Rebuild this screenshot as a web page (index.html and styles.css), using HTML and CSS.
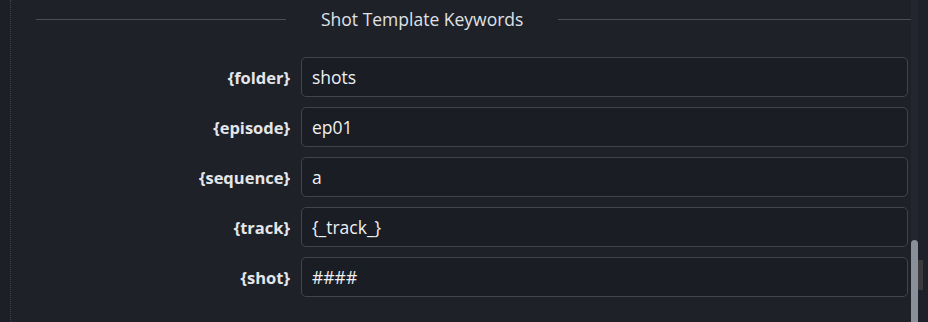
FILE: index.html
```html
<!DOCTYPE html>
<html lang="en">
<head>
    <meta charset="UTF-8">
    <meta name="viewport" content="width=device-width, initial-scale=1.0">
    <title>Shot Template Keywords</title>
    <link rel="stylesheet" href="styles.css">
</head>
<body>

    <div class="gutter"></div>

    <div class="panel">
        <div class="section-title">
            <span class="rule rule-left"></span>
            <h2>Shot Template Keywords</h2>
            <span class="rule"></span>
        </div>

        <div class="fields">
            <label for="kwFolder">{folder}</label>
            <input type="text" id="kwFolder" value="shots">

            <label for="kwEpisode">{episode}</label>
            <input type="text" id="kwEpisode" value="ep01">

            <label for="kwSequence">{sequence}</label>
            <input type="text" id="kwSequence" value="a">

            <label for="kwTrack">{track}</label>
            <input type="text" id="kwTrack" value="{_track_}">

            <label for="kwShot">{shot}</label>
            <input type="text" id="kwShot" value="####">
        </div>
    </div>

    <div class="scroll-track">
        <div class="scroll-thumb"></div>
    </div>

    <div class="side">
        <div class="side-mark"></div>
    </div>

</body>
</html>
```

FILE: styles.css
```css
html, body {
    height: 100%;
}
body {
    margin: 0;
    display: flex;
    overflow: hidden;
    background-color: #1f2128;
    color: #e6e9ee;
    font-family: "Open Sans", "Noto Sans", sans-serif;
}
.gutter {
    width: 10px;
    flex-shrink: 0;
    background-color: #1c1f27;
    border-right: 1px dotted #3d414a;
}
.panel {
    flex: 1;
    padding: 0 0 0 25px;
}
.section-title {
    display: flex;
    align-items: center;
    gap: 35px;
    height: 38px;
}
.section-title h2 {
    margin: 0;
    font-size: 17.5px;
    font-weight: 500;
    color: #dfe2e7;
    white-space: nowrap;
}
.rule {
    flex: 1;
    height: 1px;
    background-color: #4a4d55;
}
.rule-left {
    flex: 0 0 250px;
}
.fields {
    display: grid;
    grid-template-columns: 254px 1fr;
    column-gap: 11px;
    row-gap: 10px;
    margin: 19px 3px 0 0;
}
.fields label {
    text-align: right;
    align-self: center;
    font-weight: 700;
    font-size: 16.5px;
    color: #e3e6eb;
}
.fields input[type="text"] {
    height: 40px;
    box-sizing: border-box;
    padding: 0 10px;
    background-color: #1b1d24;
    border: 1px solid #41444c;
    border-radius: 5px;
    color: #eef0f3;
    font-family: inherit;
    font-size: 17.5px;
    font-weight: 500;
    outline: none;
}
.scroll-track {
    width: 7px;
    flex-shrink: 0;
    background-color: #23262e;
    display: flex;
    flex-direction: column;
    justify-content: flex-end;
}
.scroll-thumb {
    height: 82px;
    background-color: #8a9099;
    border-radius: 4px 4px 0 0;
}
.side {
    width: 10px;
    flex-shrink: 0;
    background-color: #1e2129;
    padding-top: 260px;
}
.side-mark {
    width: 5px;
    height: 30px;
    background-color: #3a393c;
}
```
